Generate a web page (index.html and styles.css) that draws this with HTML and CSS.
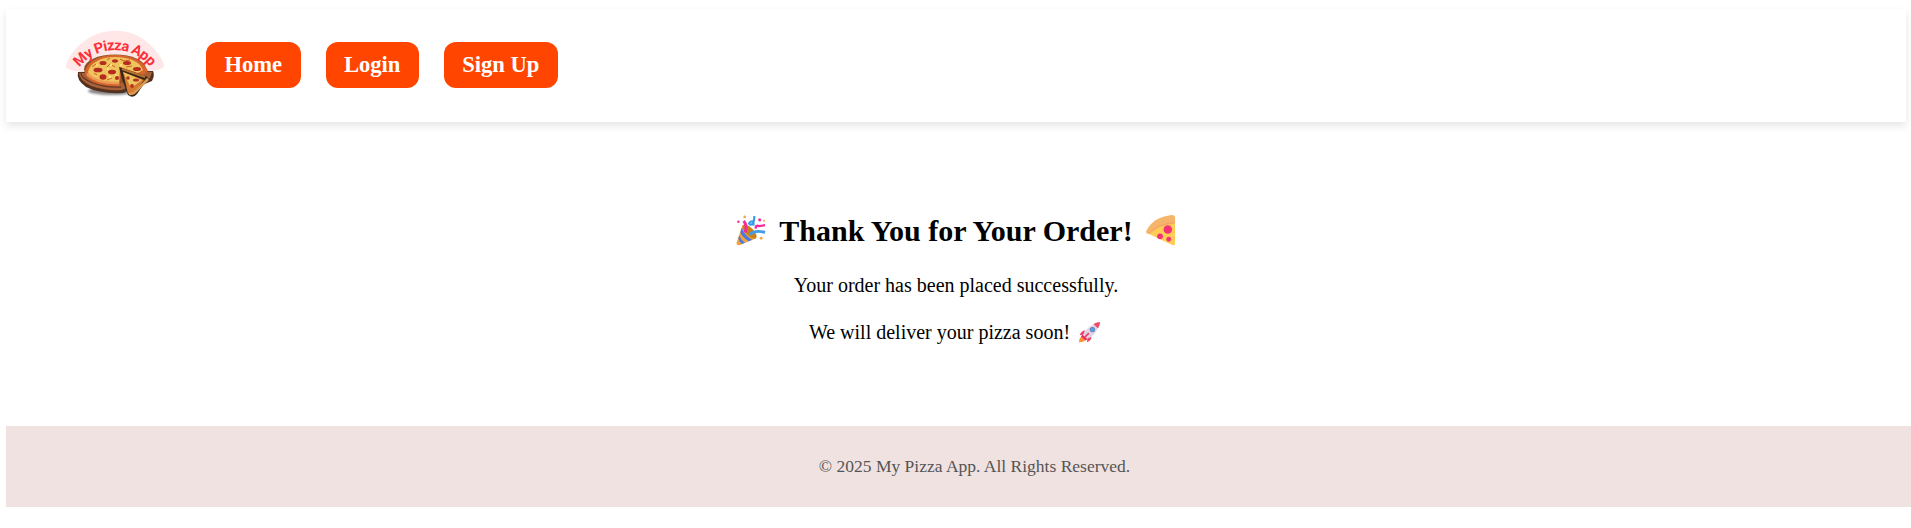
FILE: index.html
```html
<!DOCTYPE html>
<html lang="en">
<head>
<meta charset="utf-8">
<title>My Pizza App</title>
<link rel="stylesheet" href="styles.css">
</head>
<body>
<header class="navbar">
  <svg class="logo" viewBox="60 25 110 80">
    <defs>
      <path id="arc" d="M79.500 67.500A45 45 0 0 1 151 68"/>
      <filter id="soft" x="-10%" y="-30%" width="120%" height="170%"><feGaussianBlur stdDeviation="1"/></filter>
    </defs>
    <path d="M66 66C67 59 75 47 86 40C103 28 127 28 143 39C153 46 162 57 164 65Q164 68 160 69Q152 72 145 72H84Q75 72 68 69Q65.500 68 66 66Z" fill="#ffe7e7"/>
    <ellipse cx="112" cy="91" rx="24" ry="4" fill="#888" filter="url(#soft)"/>
    <path d="M78 72Q76 80 86 87Q100 94 123 93L152 81Q155 75 153 71Z" fill="#54301f"/>
    <path d="M79 73Q79 80 91 86Q105 91 122 90L150 78L152 72Z" fill="#a66138"/>
    <path d="M81 72Q80 78 93 83Q106 88 121 87" fill="none" stroke="#6b3721" stroke-width="1.300"/>
    <ellipse cx="115" cy="69" rx="31" ry="14.500" fill="#8b5127"/>
    <path d="M85 73C86 62 99 55 115 55C134 55 144 62 148 71L143 75L121 68L120 86C103 86 88 83 85 73Z" fill="#d8652b"/>
    <path d="M88 72C90 63 101 57 115 57C130 57 140 62 143 70L138 73L120 67L119 82C102 83 90 79 88 72Z" fill="#efc45c"/>
    <path d="M87 74Q98 84 119 83" fill="none" stroke="#ec9a55" stroke-width="2.500"/>
    <g fill="#b52b20"><ellipse cx="98" cy="70" rx="4.500" ry="2.300"/><ellipse cx="103" cy="63" rx="3.500" ry="2"/><ellipse cx="115" cy="61" rx="3" ry="1.700"/><ellipse cx="112" cy="72" rx="4" ry="2.300"/><ellipse cx="103" cy="77" rx="3.500" ry="2.800"/><ellipse cx="127" cy="63" rx="4" ry="2"/><ellipse cx="137" cy="69" rx="4" ry="2"/><ellipse cx="117" cy="78" rx="2" ry="2"/></g>
    <g fill="none" stroke="#d45b2a" stroke-width="1"><path d="M92 67l4-3M107 67l3-3 5 3M97 75l-3-2M107 80l5-2M120 59l4 2 6-1M132 66l-6 1M110 58l-3 2"/></g>
    <g fill="#f8e184"><circle cx="108" cy="69" r="1.300"/><circle cx="111" cy="65" r="1.200"/><circle cx="110" cy="77" r="1.300"/><circle cx="121" cy="65" r="1.200"/><circle cx="97" cy="65" r="1"/><circle cx="116" cy="75" r="1"/></g>
    <path d="M119 67L148 77L146 81L137 94Q133 99 128 95L122 79Z" fill="#39281b"/>
    <path d="M123 72L144 80L135 92L128 94Z" fill="#d67a31"/>
    <path d="M123 72L142 80L131 88Z" fill="#edc45d"/>
    <path d="M122 69L145 77" stroke="#b8732f" stroke-width="2"/>
    <path d="M129 94Q134 94 136 91L148 79" fill="none" stroke="#d99a54" stroke-width="2.600"/>
    <g fill="#b33120"><circle cx="128" cy="78" r="1.700"/><ellipse cx="136" cy="80" rx="3" ry="1.500"/><circle cx="132" cy="86" r="1.900"/></g>
    <text class="logo-text"><textPath href="#arc" textLength="81">My Pizza App</textPath></text>
  </svg>
  <nav class="links">
    <a class="link">Home</a>
    <a class="link">Login</a>
    <a class="link">Sign Up</a>
  </nav>
</header>
<main class="thanks">
  <h2 class="title">
    <svg class="emoji" viewBox="0 0 32 32">
      <path d="M8 10L1.500 29Q1.500 32 5 31L22 24Z" fill="#f2a33c"/>
      <ellipse cx="15" cy="17" rx="4" ry="9.500" transform="rotate(-45 15 17)" fill="#c98219"/>
      <path d="M7 13Q10 22 18 25.500L14 27Q7 22 5.500 18ZM4.500 21Q6 26 10.500 28.500L7 30Q4 27 3.500 24Z" fill="#4779e8"/>
      <path d="M10.500 18Q13 11 9 6" fill="none" stroke="#f52b9b" stroke-width="3"/>
      <path d="M15 20Q21 15 31 18" fill="none" stroke="#419de5" stroke-width="3"/>
      <path d="M20 1Q20 10 16 10Q13 9 16 7Q20 5 19 11" fill="none" stroke="#379be4" stroke-width="2.200"/>
      <path d="M21.500 14Q21 10 25 11.500Q26 11.500 31 10.500" fill="none" stroke="#f52b9b" stroke-width="2.500"/>
      <g fill="#f52b9b"><circle cx="3.500" cy="7" r="1.300"/><circle cx="25.500" cy="5" r="1.600"/></g>
      <g fill="#f4aa43"><circle cx="10" cy="2" r="1.400"/><circle cx="30" cy="6" r="1"/><circle cx="27" cy="24" r="1.500"/></g>
    </svg>
    <span class="title-text">Thank You for Your Order!</span>
    <svg class="emoji" viewBox="0 0 32 32">
      <path d="M1 18L27 4.500Q30 7 30 10V29Q30 32.500 27 31L2 19Z" fill="#ffcd55"/>
      <path d="M0 17Q7 2 27 0Q30 0 30 3V8Q15 9 4 19Q0 20 0 17Z" fill="#f5b56b"/>
      <path d="M3 19Q13 9 30 8" fill="none" stroke="#f5a468" stroke-width="1.300"/>
      <g fill="#f33277"><circle cx="22.500" cy="15" r="4.400"/><circle cx="14.500" cy="22" r="3"/><circle cx="23.500" cy="25" r="2.500"/></g>
    </svg>
  </h2>
  <p class="line">Your order has been placed successfully.</p>
  <p class="line line-icon"><span>We will deliver your pizza soon!</span>
    <svg class="rocket" viewBox="0 0 32 32">
      <path d="M9 13Q4 13 1 20L8 19ZM19 23Q19 28 12 31L13 24Z" fill="#ef3f67"/>
      <path d="M6 21Q0 23 0 31Q8 31 11 26Z" fill="#ff9435"/>
      <path d="M6 20Q12 5 31 1Q28 19 12 26Z" fill="#ddd5e4"/>
      <path d="M22 3Q27 0 32 0Q32 5 29 10Z" fill="#f3486c"/>
      <path d="M5 19L13 26L10 28L3 22Z" fill="#e72f64"/>
      <circle cx="20.500" cy="11.500" r="4" fill="#6f7bae"/><circle cx="20.500" cy="11.500" r="2.800" fill="#4ea7ea"/>
      <path d="M9 23L15 17" stroke="#ed3f6c" stroke-width="2.500"/>
    </svg>
  </p>
</main>
<footer class="footer">© 2025 My Pizza App. All Rights Reserved.</footer>
</body>
</html>
```
FILE: styles.css
```css
body {
  margin: 0;
  padding: 9px 5px 0 6px;
  height: 528px;
  box-sizing: border-box;
  overflow: hidden;
  background: #fff;
  font-family: "Liberation Serif", "Times New Roman", serif;
}
.navbar {
  display: flex;
  height: 113px;
  box-sizing: border-box;
  padding: 16px 54px;
  gap: 36px;
  box-shadow: 0 4px 8px rgba(0, 0, 0, 0.1);
}
.logo { width: 110px; height: 80px; }
.logo-text {
  font: bold 14.500px Roboto, sans-serif;
  fill: #fb3038;
}
.links {
  display: flex;
  align-items: flex-start;
  gap: 25px;
  padding-top: 17px;
}
.link {
  height: 46px;
  padding: 0 18.400px;
  border-radius: 12px;
  background: #ff4500;
  color: #fff;
  font-size: 22.600px;
  font-weight: bold;
  line-height: 45px;
}
.thanks {
  display: flex;
  flex-direction: column;
  align-items: center;
  padding-top: 91px;
  height: 213px;
}
.title {
  display: flex;
  align-items: center;
  gap: 13px;
  margin: 0 0 1px;
  height: 36px;
  font-size: 30px;
  line-height: 36px;
}
.emoji { width: 31px; height: 31px; margin-top: -2px; }
.line {
  margin: 24px 0 0;
  height: 23px;
  font-size: 20px;
  line-height: 23px;
}
.line-icon {
  display: flex;
  align-items: center;
  gap: 9px;
  padding-right: 3px;
}
.rocket { width: 21px; height: 21px; }
.footer {
  width: 1937px;
  height: 81px;
  background: #f0e2e0;
  color: #555;
  font-size: 17.500px;
  line-height: 81px;
  text-align: center;
}
```
